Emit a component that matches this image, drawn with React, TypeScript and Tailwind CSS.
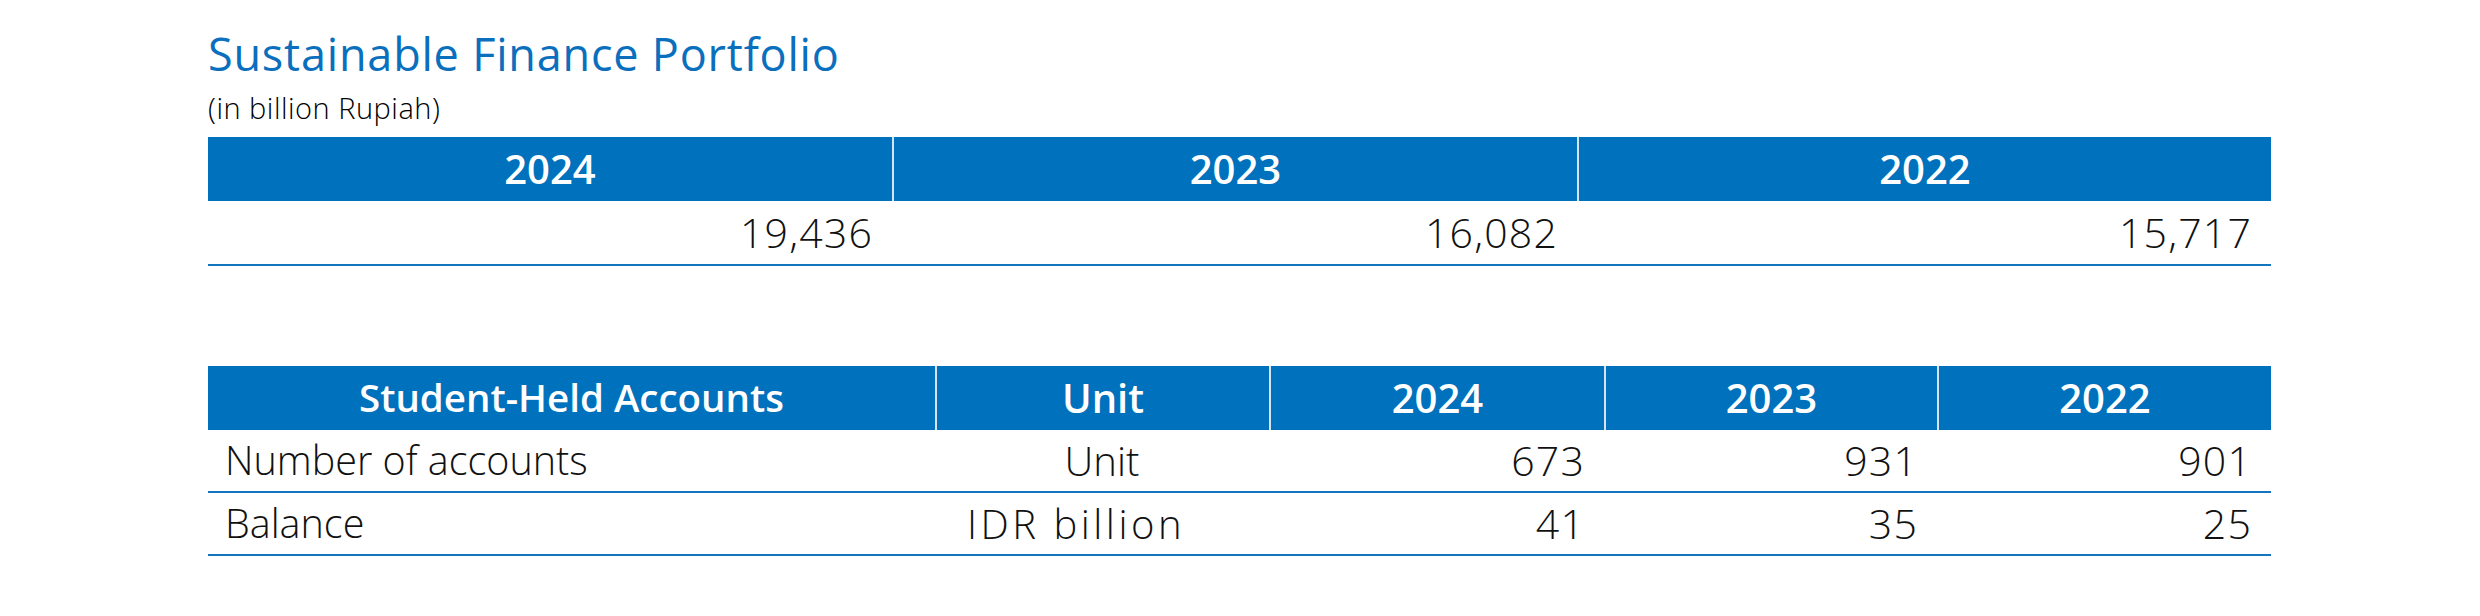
const font = { fontFamily: '"Open Sans", "Liberation Sans", sans-serif' };

const portfolio = [
  { year: '2024', value: '19,436' },
  { year: '2023', value: '16,082' },
  { year: '2022', value: '15,717' },
];

const studentRows = [
  { label: 'Number of accounts', unit: 'Unit', values: ['673', '931', '901'] },
  { label: 'Balance', unit: 'IDR billion', values: ['41', '35', '25'] },
];

function HeadCell({
  children,
  first,
  size = 'text-[40px]',
}: {
  children: React.ReactNode;
  first?: boolean;
  size?: string;
}) {
  return (
    <div
      className={`h-[64px] bg-[#0071bc] flex items-center justify-center text-white font-semibold ${size} ${
        first ? '' : 'border-l-2 border-[#d6e3f0]'
      }`}
    >
      {children}
    </div>
  );
}

function App() {
  return (
    <main className="w-[2480px] h-[616px] bg-white pl-[208px] pt-[28px]" style={font}>
      {/* Title */}
      <h1 className="text-[45px] leading-[52px] font-medium text-[#0a6fbd] tracking-[0.8px]">
        Sustainable Finance Portfolio
      </h1>
      <p className="text-[29px] leading-[36px] font-light text-black tracking-[0.5px] mt-[10px]">
        (in billion Rupiah)
      </p>

      {/* Portfolio table */}
      <div className="w-[2063px] mt-[11px] grid grid-cols-[684px_685px_694px]">
        {portfolio.map((p, i) => (
          <HeadCell key={p.year} first={i === 0}>
            {p.year}
          </HeadCell>
        ))}
        {portfolio.map((p) => (
          <div
            key={p.value}
            className="h-[65px] flex items-center justify-end pr-[19px] border-b-2 border-[#1374bf] text-[41px] tracking-[1.2px] font-light text-[#111]"
          >
            {p.value}
          </div>
        ))}
      </div>

      {/* Student accounts table */}
      <div className="w-[2063px] mt-[100px] grid grid-cols-[727px_334px_335px_333px_334px]">
        <HeadCell first size="text-[38.5px]">
          Student-Held Accounts
        </HeadCell>
        <HeadCell>Unit</HeadCell>
        <HeadCell>2024</HeadCell>
        <HeadCell>2023</HeadCell>
        <HeadCell>2022</HeadCell>
        {studentRows.map((r) => (
          <div key={r.label} className="contents">
            <div className="h-[63px] flex items-center pl-[17px] border-b-2 border-[#1374bf] text-[39.5px] font-light text-[#111]">
              {r.label}
            </div>
            <div
              className={`h-[63px] flex items-center justify-center border-b-2 border-[#1374bf] text-[40px] font-light text-[#111] ${
                r.unit === 'Unit' ? '' : 'pr-[52px] tracking-[3.5px]'
              }`}
            >
              {r.unit}
            </div>
            {r.values.map((v, i) => (
              <div
                key={i}
                className="h-[63px] flex items-center justify-end pr-[19px] border-b-2 border-[#1374bf] text-[41px] tracking-[1.2px] font-light text-[#111]"
              >
                {v}
              </div>
            ))}
          </div>
        ))}
      </div>
    </main>
  );
}

export default App;
